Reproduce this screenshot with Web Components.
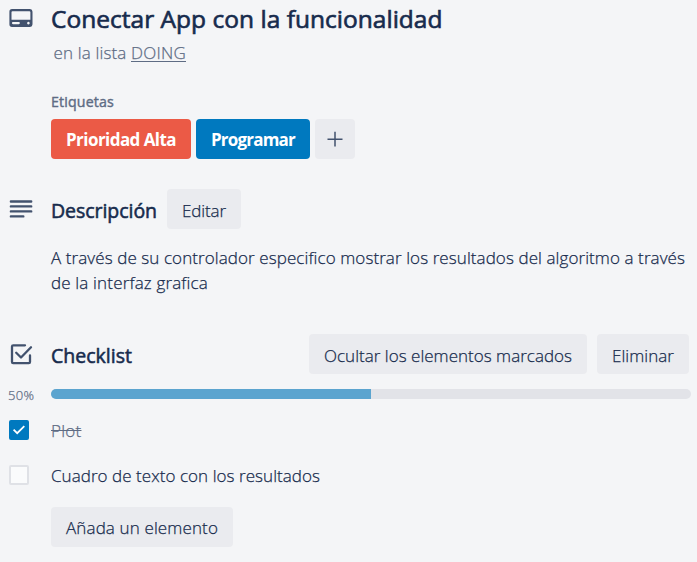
<!DOCTYPE html>
<html lang="es">
<head>
<meta charset="utf-8">
<title>Conectar App con la funcionalidad</title>
<style>
html,body{margin:0;background:#f4f5f7}
body{width:697px;height:562px;overflow:hidden;font-family:"Open Sans","Noto Sans",sans-serif;font-weight:300;-webkit-text-stroke:.25px;color:#172b4d}
</style>
</head>
<body>
<card-detail></card-detail>
<script>
const define=(name,html,setup)=>customElements.define(name,class extends HTMLElement{
  connectedCallback(){
    if(this.shadowRoot)return;
    this.attachShadow({mode:'open'}).innerHTML=html;
    if(setup)setup.call(this,this.shadowRoot);
  }
});

// One line of text, tracked so that it fills the width given in its w attribute.
define('fit-text','<style>:host{display:inline-block;white-space:pre;vertical-align:top}</style><slot></slot>',function(){
  const w=+this.getAttribute('w');
  const natural=this.getBoundingClientRect().width;
  this.style.letterSpacing=((w-natural)/this.textContent.length)+'px';
  this.style.width=w+'px';
});

define('card-icon','<style>:host{display:block;width:25px;height:25px}svg{display:block;overflow:visible}</style><svg width="25" height="25" fill="none" stroke="#42526e"></svg>',function(r){
  r.querySelector('svg').innerHTML={
    card:'<path fill="#42526e" stroke="none" fill-rule="evenodd" d="M4 0H22A2.700 2.700 0 0 1 24.500 2.700V15.300A2.700 2.700 0 0 1 22 18H4A2.700 2.700 0 0 1 1.400 15.300V2.700A2.700 2.700 0 0 1 4 0zM4.500 2.200a1 1 0 0 0-1 1V10.800H22.400V3.200a1 1 0 0 0-1-1zM5 13a1.100 1.100 0 0 0 0 2.200H10.800a1.100 1.100 0 0 0 0-2.200zM20.400 12.800a1.300 1.300 0 1 0 .01 0z"/>',
    lines:'<path stroke-width="2.400" stroke-linecap="round" d="M2.900 1.500H23.200M2.900 6.400H23.200M2.900 11.400H23.200M2.900 16.400H15.300"/>',
    check:'<path stroke-width="2.300" stroke-linecap="round" stroke-linejoin="round" d="M17 .3H5.200Q4 .3 4 1.500V17Q4 18.200 5.200 18.200H20.800Q22 18.200 22 17V10.500M8.200 7.800L13 12.500L23 2.300"/>'
  }[this.getAttribute('kind')];
});

define('card-button',`<style>:host{display:block;box-sizing:border-box;height:40px;padding:0 15px;border-radius:4px;background:#eaebef;font-size:17px;line-height:42px;white-space:nowrap}
:host([tone]){color:#fff;font-weight:700;line-height:41px;-webkit-text-stroke:0}
:host([tone=red]){background:#eb5a46}:host([tone=blue]){background:#0079bf}</style><slot></slot>`);

define('plus-button','<style>:host{display:grid;place-items:center;width:40px;height:40px;border-radius:4px;background:#eaebef}</style><svg width="16" height="16" stroke="#42526e" stroke-width="1.500"><path d="M.5 8.200H15.500M8 .8V15.600"/></svg>');

// Two columns: gutter for the icon, then the content.
define('card-row','<style>:host{display:grid;grid-template-columns:43px 1fr;padding-left:8px}</style><slot name="lead"><span></span></slot><div><slot></slot></div>');

define('progress-bar','<style>:host{display:block;width:640px;height:10px;border-radius:5px;background:#e2e3e8;overflow:hidden}i{display:block;height:100%;background:#5ba4cf}</style><i></i>',function(r){
  r.querySelector('i').style.width=this.getAttribute('value')+'%';
});

define('check-box',`<style>:host{display:block;box-sizing:border-box;width:20px;height:20px;margin-left:1px;border-radius:2px;border:2px solid #dfe1e6;background:#fafbfc}
:host([checked]){border-color:#0079bf;background:#0079bf}svg{display:none}:host([checked]) svg{display:block}</style>
<svg width="16" height="16" fill="none" stroke="#fff" stroke-width="1.800"><path d="M2.600 7.600L6.200 11.200L13.300 4.200"/></svg>`);

define('card-detail',`<style>
:host{display:flex;flex-direction:column;width:697px;height:562px}
.title{font-size:24.500px;font-weight:400;line-height:37px;-webkit-text-stroke:.65px}
.sub{font-size:17px;line-height:24px;padding-left:2.500px;color:#5e6c84;margin-top:4px}
.sub u{text-decoration:none}
.link{border-bottom:1px solid;height:20px}
.labels{font-size:14.2px;font-weight:400;-webkit-text-stroke:.4px;line-height:20px;color:#5e6c84;margin-top:27px}
.bar{display:flex;gap:5px;margin-top:7px}
.desc{margin-top:30px}
.head{display:flex;gap:10px;height:40px}
.head h3{margin:0;font-size:19.500px;font-weight:400;line-height:43px;-webkit-text-stroke:.55px}
.head card-button{line-height:44px}
.push{margin-left:auto}
.check .head{width:638px}
p{margin:16px 0 0;font-size:17px;line-height:25px;height:50px}
p fit-text{float:left;clear:left}
.check{margin-top:39px}
.prog{margin-top:15px}
.pct{font-size:13px;line-height:12px;color:#5e6c84}
.item{font-size:17px;line-height:24px}
.done{color:#5e6c84;text-decoration:line-through}
.add{margin-top:19px}
.add card-button{width:182px}
</style>
<card-row>
  <card-icon slot="lead" kind="card" style="margin-top:9px"></card-icon>
  <div class="title"><fit-text w="391.5">Conectar App con la funcionalidad</fit-text></div>
  <div class="sub"><fit-text w="77.5">en la lista </fit-text><u><fit-text class="link" w="55">DOING</fit-text></u></div>
  <div class="labels"><fit-text w="63">Etiquetas</fit-text></div>
  <div class="bar"><card-button tone="red"><fit-text w="110">Prioridad Alta</fit-text></card-button><card-button tone="blue"><fit-text w="84">Programar</fit-text></card-button><plus-button></plus-button></div>
</card-row>
<card-row class="desc">
  <card-icon slot="lead" kind="lines" style="margin-top:11px"></card-icon>
  <div class="head"><h3><fit-text w="106">Descripción</fit-text></h3><card-button><fit-text w="44">Editar</fit-text></card-button></div>
  <p><fit-text w="634">A través de su controlador especifico mostrar los resultados del algoritmo a través</fit-text> <fit-text w="157">de la interfaz grafica</fit-text></p>
</card-row>
<card-row class="check">
  <card-icon slot="lead" kind="check" style="margin-top:11px"></card-icon>
  <div class="head"><h3><fit-text w="81">Checklist</fit-text></h3><card-button class="push"><fit-text w="248">Ocultar los elementos marcados</fit-text></card-button><card-button><fit-text w="62">Eliminar</fit-text></card-button></div>
</card-row>
<card-row class="prog">
  <div slot="lead" class="pct"><fit-text w="26.5">50%</fit-text></div>
  <progress-bar value="50"></progress-bar>
</card-row>
<card-row style="margin-top:18px">
  <check-box slot="lead" checked style="margin-top:1px"></check-box>
  <div class="item"><fit-text class="done" w="30.5">Plot</fit-text></div>
</card-row>
<card-row style="margin-top:21px">
  <check-box slot="lead" style="margin-top:1px"></check-box>
  <div class="item"><fit-text w="269">Cuadro de texto con los resultados</fit-text></div>
</card-row>
<card-row class="add">
  <card-button><fit-text w="152">Añada un elemento</fit-text></card-button>
</card-row>`);
</script>
</body>
</html>
